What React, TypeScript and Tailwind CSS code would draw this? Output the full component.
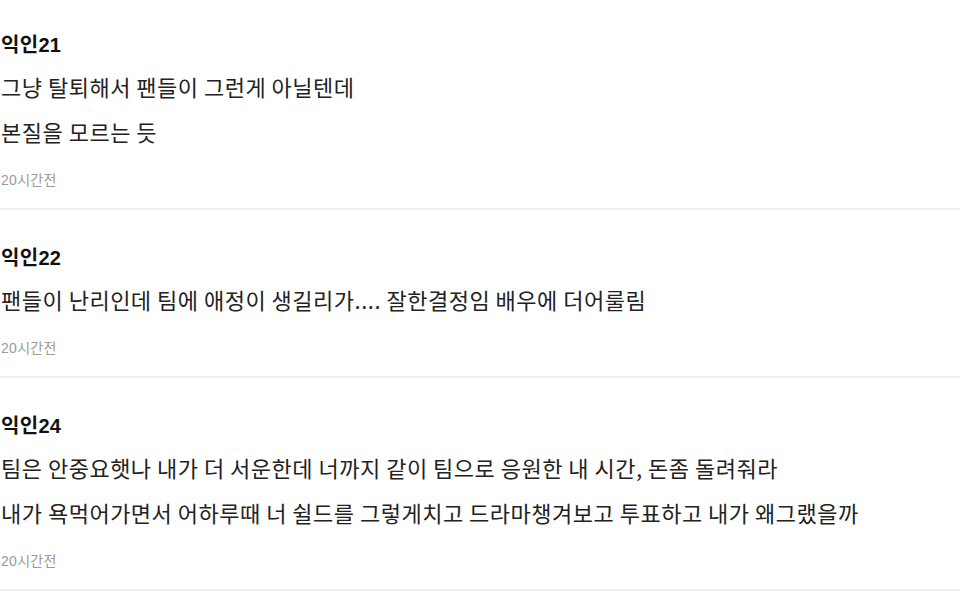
const comments = [
  {
    name: "익인21",
    lines: ["그냥 탈퇴해서 팬들이 그런게 아닐텐데", "본질을 모르는 듯"],
    time: "20시간전",
  },
  {
    name: "익인22",
    lines: ["팬들이 난리인데 팀에 애정이 생길리가.... 잘한결정임 배우에 더어룰림"],
    time: "20시간전",
  },
  {
    name: "익인24",
    lines: [
      "팀은 안중요햇나 내가 더 서운한데 너까지 같이 팀으로 응원한 내 시간, 돈좀 돌려줘라",
      "내가 욕먹어가면서 어하루때 너 쉴드를 그렇게치고 드라마챙겨보고 투표하고 내가 왜그랬을까",
    ],
    time: "20시간전",
  },
];

function CommentItem({ name, lines, time }: { name: string; lines: string[]; time: string }) {
  return (
    <li className="border-b-2 border-[#efefef] pt-[34px] pb-[18px] first:pt-[30px]">
      <div className="pl-px text-[20px] font-bold leading-[28px] tracking-[0.3px] text-[#111] [font-family:'Liberation_Sans','Noto_Sans_CJK_KR',sans-serif]">
        {name}
      </div>
      <div className="mt-[5px]">
        {lines.map((line, i) => (
          <p
            key={i}
            className="pl-px text-[22px] leading-[45px] tracking-[0.5px] text-[#222] [font-family:'Noto_Sans_CJK_KR',sans-serif]"
          >
            {line}
          </p>
        ))}
      </div>
      <div className="mt-[16px] pl-px text-[14px] leading-[20px] tracking-[0.3px] text-[#9a9a9a] [font-family:'Liberation_Sans','Noto_Sans_CJK_KR',sans-serif]">
        {time}
      </div>
    </li>
  );
}

export default function App() {
  return (
    <div className="min-h-[609px] w-[960px] bg-white pt-px">
      <ul>
        {comments.map((c) => (
          <CommentItem key={c.name} {...c} />
        ))}
      </ul>
    </div>
  );
}
